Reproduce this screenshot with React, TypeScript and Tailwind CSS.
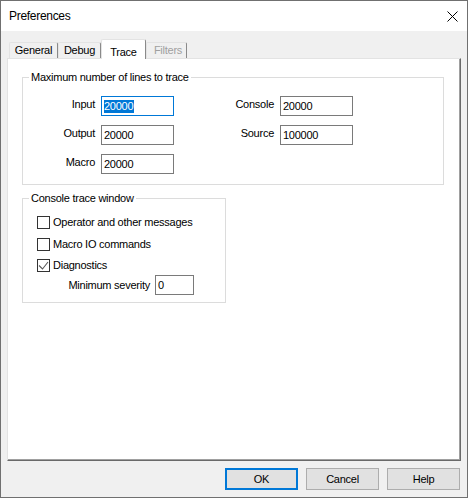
import type { ReactNode } from "react";

interface TabItem {
  label: string;
  width: string;
  active?: boolean;
  disabled?: boolean;
}

interface Field {
  label: string;
  value: string;
  focused?: boolean;
}

const tabs: TabItem[] = [
  { label: "General", width: "w-[49px]" },
  { label: "Debug", width: "w-[43px]" },
  { label: "Trace", width: "w-[45px]", active: true },
  { label: "Filters", width: "w-[41px]", disabled: true },
];

function TextBox({ value, focused = false, width = "w-[73px]" }: { value: string; focused?: boolean; width?: string }): JSX.Element {
  return (
    <div
      className={`h-[20px] ${width} bg-white border flex items-center pl-[2px] leading-[13px] ${
        focused ? "border-[#0078d7]" : "border-[#7a7a7a]"
      }`}
    >
      {focused ? <span className="bg-[#0078d7] text-white pr-[1px]">{value}</span> : <span>{value}</span>}
    </div>
  );
}

function Label({ children }: { children: ReactNode }): JSX.Element {
  return <span className="text-right self-center mb-[4px] leading-[13px]">{children}</span>;
}

function CheckRow({ label, checked = false, className = "" }: { label: string; checked?: boolean; className?: string }): JSX.Element {
  return (
    <div className={`flex items-center h-[13px] ml-[14px] ${className}`}>
      <div className="w-[13px] h-[13px] border border-[#333333] bg-white">
        {checked && (
          <svg width="11" height="11" viewBox="0 0 11 11">
            <path d="M1 5.5 L4.5 9 L10 2" stroke="#5a5a5a" strokeWidth="1.1" fill="none" />
          </svg>
        )}
      </div>
      <span className="ml-[3px] leading-[13px]">{label}</span>
    </div>
  );
}

export default function App(): JSX.Element {
  const leftFields: Field[] = [
    { label: "Input", value: "20000", focused: true },
    { label: "Output", value: "20000" },
    { label: "Macro", value: "20000" },
  ];
  const rightFields: Field[] = [
    { label: "Console", value: "20000" },
    { label: "Source", value: "100000" },
  ];

  return (
    <div className="w-[468px] h-[498px] border border-[#707070] bg-[#f0f0f0] flex flex-col text-black text-[11px] tracking-[-0.25px] font-['Liberation_Sans',Arial,sans-serif]">
      {/* Title bar */}
      <div className="h-[30px] bg-white flex items-center justify-between pl-[8px] pr-[9px]">
        <span className="text-[12px] leading-[14px] tracking-[-0.3px]">Preferences</span>
        <svg width="11" height="11" viewBox="0 0 11 11">
          <path d="M0.5 0.5 L10.5 10.5 M10.5 0.5 L0.5 10.5" stroke="#000" strokeWidth="1" />
        </svg>
      </div>

      {/* Tabs */}
      <div className="pt-[8px]">
        <div className="h-[19px] flex items-end pl-[8px]">
          {tabs.map((tab) => (
            <div
              key={tab.label}
              className={`${tab.width} flex justify-center border-l border-t border-r border-l-[#e3e3e3] border-t-[#e3e3e3] border-r-[#8a8a8a] rounded-t-[2px] ${
                tab.active
                  ? "relative z-10 h-[20px] -mb-px bg-white items-start pt-[6px]"
                  : "h-[16px] items-center"
              } ${tab.disabled ? "text-[#a0a0a0] pl-[3px]" : ""}`}
            >
              <span className="leading-[13px]">{tab.label}</span>
            </div>
          ))}
        </div>

        {/* Tab page */}
        <div className="ml-[6px] w-[454px] h-[403px] bg-white border border-t-[#e3e3e3] border-l-[#e3e3e3] border-r-[#696969] border-b-[#696969] shadow-[inset_-1px_-1px_0_#a0a0a0] pt-[12px]">
          <fieldset className="border border-[#dcdcdc] ml-[14px] w-[422px] pb-[10px]">
            <legend className="ml-[6px] px-[2px] leading-[13px]">Maximum number of lines to trace</legend>
            <div className="mt-[12px] pl-[6px] grid grid-cols-[66px_73px_94px_73px] gap-x-[6px] gap-y-[9px]">
              {leftFields.map((field, i) => (
                <div key={field.label} className="contents">
                  <Label>{field.label}</Label>
                  <TextBox value={field.value} focused={field.focused} />
                  {rightFields[i] ? (
                    <>
                      <Label>{rightFields[i].label}</Label>
                      <TextBox value={rightFields[i].value} />
                    </>
                  ) : (
                    <>
                      <span />
                      <span />
                    </>
                  )}
                </div>
              ))}
            </div>
          </fieldset>

          <fieldset className="border border-[#dcdcdc] ml-[14px] mt-[7px] w-[204px] pb-[7px]">
            <legend className="ml-[6px] px-[2px] leading-[13px]">Console trace window</legend>
            <CheckRow label="Operator and other messages" className="mt-[11px]" />
            <CheckRow label="Macro IO commands" className="mt-[9px]" />
            <CheckRow label="Diagnostics" checked className="mt-[8px]" />
            <div className="mt-[3px] w-[171px] flex justify-end items-center gap-[5px]">
              <span className="leading-[13px]">Minimum severity</span>
              <TextBox value="0" width="w-[39px]" />
            </div>
          </fieldset>
        </div>
      </div>

      {/* Dialog buttons */}
      <div className="flex justify-end gap-[8px] pt-[7px] pr-[7px]">
        {["OK", "Cancel", "Help"].map((label) => (
          <button
            key={label}
            className={`w-[73px] h-[22px] bg-[#e1e1e1] flex items-center justify-center leading-[13px] ${
              label === "OK" ? "border-2 border-[#0078d7]" : "border border-[#adadad]"
            }`}
          >
            {label}
          </button>
        ))}
      </div>
    </div>
  );
}
